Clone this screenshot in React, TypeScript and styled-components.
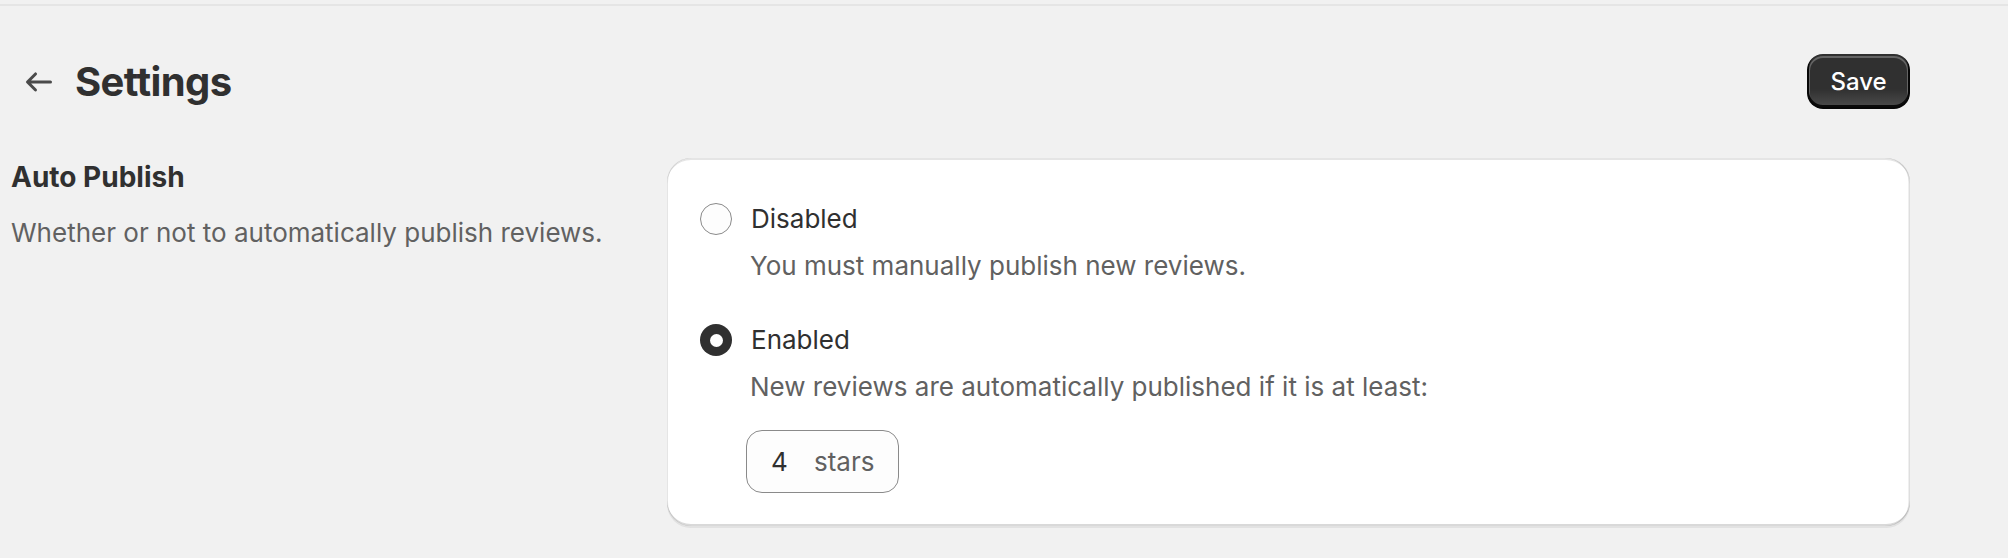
import React from "react";
import styled, { createGlobalStyle } from "styled-components";

const GlobalStyle = createGlobalStyle`
  html, body {
    margin: 0;
    padding: 0;
    background: #f1f1f1;
  }
  body {
    font-family: Inter, "Noto Sans", "Liberation Sans", sans-serif;
    color: #303030;
    -webkit-font-smoothing: antialiased;
  }
  * { box-sizing: border-box; }
`;

const TopRule = styled.div`
  height: 2px;
  margin-top: 4px;
  background: #e5e5e5;
`;

const Page = styled.div`
  padding: 0 98px 40px 11px;
`;

const Header = styled.header`
  display: flex;
  align-items: center;
  justify-content: space-between;
  margin-top: 48px;
  padding-left: 8px;
`;

const TitleGroup = styled.div`
  display: flex;
  align-items: center;
  gap: 16px;
`;

const BackButton = styled.button`
  display: flex;
  align-items: center;
  justify-content: center;
  width: 40px;
  height: 40px;
  padding: 0;
  border: none;
  background: transparent;
  color: #4a4a4a;
  cursor: pointer;
`;

const Title = styled.h1`
  margin: 0;
  font-size: 40px;
  line-height: 48px;
  font-weight: 700;
  letter-spacing: -0.6px;
  color: #303030;
`;

const PrimaryButton = styled.button`
  width: 103px;
  height: 55px;
  padding: 0;
  border: none;
  border-radius: 16px;
  font-family: inherit;
  font-size: 24px;
  font-weight: 550;
  color: #ffffff;
  background: linear-gradient(180deg, rgba(48, 48, 48, 0) 63.53%, rgba(255, 255, 255, 0.15) 100%), #303030;
  box-shadow: inset 0 -2px 0 2px rgba(0, 0, 0, 0.85), inset 0 0 0 2px #303030,
    inset 0 1px 0 3px rgba(255, 255, 255, 0.25);
  cursor: pointer;
`;

const Section = styled.section`
  display: grid;
  grid-template-columns: 616px 1fr;
  column-gap: 40px;
  align-items: start;
  margin-top: 47px;
`;

const Annotation = styled.div`
  display: flex;
  flex-direction: column;
  gap: 16px;
  padding-top: 1px;
`;

const AnnotationTitle = styled.h2`
  margin: 0;
  font-size: 28px;
  line-height: 40px;
  font-weight: 650;
  color: #303030;
`;

const SecondaryText = styled.p<{ $indent?: boolean }>`
  margin: 0;
  font-size: 26px;
  line-height: 40px;
  font-weight: 400;
  color: #616161;
  padding-left: ${(p) => (p.$indent ? "51px" : "0")};
`;

const Card = styled.div`
  margin-top: 2px;
  background: #ffffff;
  border-radius: 24px;
  padding: 32px 32px 33px 32px;
  box-shadow: 0 2px 0 0 rgba(26, 26, 26, 0.07), inset 1px 0 0 0 rgba(0, 0, 0, 0.1),
    inset -1.5px 0 0 0 rgba(0, 0, 0, 0.13), inset 0 -2px 0 0 rgba(0, 0, 0, 0.15),
    inset 0 2px 0 0 rgba(204, 204, 204, 0.5);
`;

const ChoiceList = styled.div`
  display: flex;
  flex-direction: column;
  gap: 25px;
`;

const Choice = styled.div`
  display: flex;
  flex-direction: column;
  gap: 7px;
`;

const ChoiceLabel = styled.label`
  display: flex;
  align-items: center;
  gap: 19px;
  padding-top: 9px;
  padding-left: 1px;
  font-size: 26px;
  line-height: 40px;
  font-weight: 400;
  color: #303030;
  cursor: pointer;
`;

const RadioCircle = styled.span<{ $checked: boolean }>`
  position: relative;
  flex: none;
  width: 32px;
  height: 32px;
  border-radius: 50%;
  background: ${(p) => (p.$checked ? "#303030" : "#fdfdfd")};
  border: ${(p) => (p.$checked ? "none" : "1.3px solid #8a8a8a")};
  &::after {
    content: "";
    display: ${(p) => (p.$checked ? "block" : "none")};
    position: absolute;
    left: 50%;
    top: 50%;
    width: 13px;
    height: 13px;
    margin: -6.5px 0 0 -6.5px;
    border-radius: 50%;
    background: #ffffff;
  }
`;

const Extra = styled.div`
  padding-left: 47px;
  margin-top: 16px;
`;

const NumberField = styled.div`
  display: inline-flex;
  align-items: center;
  height: 63px;
  padding: 0 24px;
  border: 1.3px solid #8a8a8a;
  border-radius: 16px;
  background: #fdfdfd;
  font-size: 26px;
  font-weight: 400;
`;

const FieldValue = styled.span`
  width: 35px;
  color: #303030;
`;

const FieldSuffix = styled.span`
  margin-left: 8px;
  color: #616161;
`;

const ArrowLeftIcon = () => (
  <svg width="40" height="40" viewBox="0 0 20 20" fill="currentColor" aria-hidden="true">
    <path d="M16.5 10a.75.75 0 0 1-.75.75h-9.69l2.72 2.72a.75.75 0 0 1-1.06 1.06l-4-4a.75.75 0 0 1 0-1.06l4-4a.75.75 0 1 1 1.06 1.06l-2.72 2.72h9.69a.75.75 0 0 1 .75.75Z" />
  </svg>
);

type Option = { value: string; label: string; help: string };

const options: Option[] = [
  { value: "disabled", label: "Disabled", help: "You must manually publish new reviews." },
  {
    value: "enabled",
    label: "Enabled",
    help: "New reviews are automatically published if it is at least:",
  },
];

export default function App() {
  const selected = "enabled";
  return (
    <>
      <GlobalStyle />
      <TopRule />
      <Page>
        <Header>
          <TitleGroup>
            <BackButton aria-label="Back">
              <ArrowLeftIcon />
            </BackButton>
            <Title>Settings</Title>
          </TitleGroup>
          <PrimaryButton>Save</PrimaryButton>
        </Header>
        <Section>
          <Annotation>
            <AnnotationTitle>Auto Publish</AnnotationTitle>
            <SecondaryText>Whether or not to automatically publish reviews.</SecondaryText>
          </Annotation>
          <Card>
            <ChoiceList>
              {options.map((o) => (
                <Choice key={o.value}>
                  <ChoiceLabel>
                    <RadioCircle $checked={o.value === selected} />
                    {o.label}
                  </ChoiceLabel>
                  <SecondaryText $indent>{o.help}</SecondaryText>
                  {o.value === "enabled" && (
                    <Extra>
                      <NumberField>
                        <FieldValue>4</FieldValue>
                        <FieldSuffix>stars</FieldSuffix>
                      </NumberField>
                    </Extra>
                  )}
                </Choice>
              ))}
            </ChoiceList>
          </Card>
        </Section>
      </Page>
    </>
  );
}
